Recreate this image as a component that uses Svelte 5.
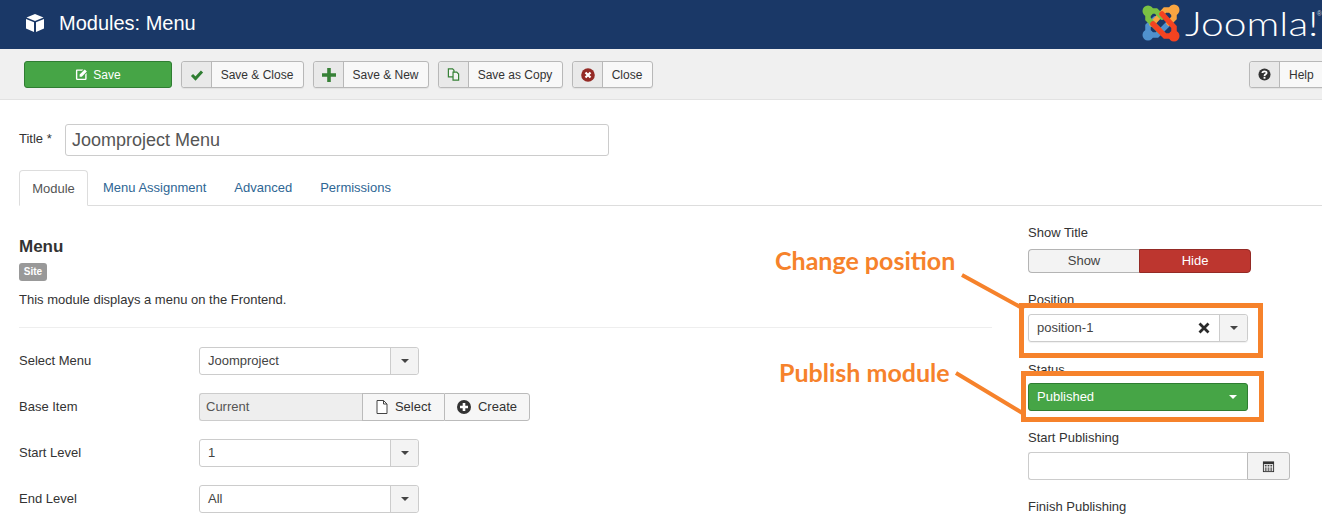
<script>
  const tools = [
    { label: 'Save & Close', icon: 'check', w: 123 },
    { label: 'Save & New', icon: 'plus', w: 116 },
    { label: 'Save as Copy', icon: 'copy', w: 125 },
    { label: 'Close', icon: 'close', w: 81 }
  ];
  const tabs = ['Menu Assignment', 'Advanced', 'Permissions'];
</script>

<div class="page">
  <header class="top">
    <svg class="cube" viewBox="0 0 20 20"><path fill="#fff" d="M10 1 18.5 4.6 10 8 1.500 4.600Z"/><path fill="#fff" d="M1 6 9 9.300V19L1 15.500Z"/><path fill="#fff" d="M19 6 11 9.300V19L19 15.500Z"/></svg>
    <h1>Modules: Menu</h1>
    <div class="brand">
      <svg class="logo" viewBox="0 0 38 38" fill="none" stroke-width="5.500" stroke-linecap="round">
        <g stroke="#5091cd"><circle cx="6" cy="31" r="5.500" fill="#5091cd" stroke="none"/><path d="M6 31V22L13 15M6 31H15L28 18"/></g>
        <g stroke="#f9a541"><circle cx="32" cy="6" r="5.500" fill="#f9a541" stroke="none"/><path d="M32 6H23L10 20M32 6V14L27 19"/></g>
        <g stroke="#7ac143"><circle cx="6" cy="7" r="5.500" fill="#7ac143" stroke="none"/><path d="M6 7H14L20 13M6 7V15L18 27"/></g>
        <g stroke="#f44321"><circle cx="32" cy="32" r="5.500" fill="#f44321" stroke="none"/><path d="M32 32H23L11 20M32 32V23L20 10"/></g>
      </svg>
      <span class="word">Joomla!</span><span class="reg">®</span>
    </div>
  </header>

  <nav class="toolbar">
    <button class="save">
      <svg viewBox="0 0 14 14" class="ico13"><path fill="#fff" d="M2 1.500H9L7.500 3H2.500V11.500H11V7L12.500 5.500V11.500Q12.500 13 11 13H2.500Q1 13 1 11.500V3Q1 1.500 2 1.500Z"/><path fill="#fff" d="M5 7 10.500 1.500 12.800 3.800 7.300 9.300H5Z"/></svg>
      Save
    </button>
    {#each tools as t}
      <button class="tool" style="width:{t.w}px">
        <span class="addon">
          {#if t.icon === 'check'}
            <svg viewBox="0 0 14 14" class="ico14"><path fill="none" stroke="#2f7d32" stroke-width="3" d="M2 7 5.500 10.500 12 3.500"/></svg>
          {:else if t.icon === 'plus'}
            <svg viewBox="0 0 14 14" class="ico14"><path fill="none" stroke="#378137" stroke-width="3.600" d="M7 0V14M0 7H14"/></svg>
          {:else if t.icon === 'copy'}
            <svg viewBox="0 0 14 14" class="ico13"><path fill="#f3f3f3" stroke="#378137" stroke-width="1.300" d="M1.500 1H6L7.500 2.500V9.500H1.500Z"/><path fill="#f3f3f3" stroke="#378137" stroke-width="1.300" d="M6.500 4.500H10.500L12.500 6.500V13H6.500Z"/></svg>
          {:else}
            <svg viewBox="0 0 14 14" class="ico14"><circle cx="7" cy="7" r="6.800" fill="#942a25"/><path stroke="#fff" stroke-width="2.200" d="M4.500 4.500 9.500 9.500M9.500 4.500 4.500 9.500"/></svg>
          {/if}
        </span>
        <span class="lbl">{t.label}</span>
      </button>
    {/each}
    <button class="tool help">
      <span class="addon">
        <svg viewBox="0 0 14 14" class="ico13"><circle cx="7" cy="7" r="6.500" fill="#333"/><path fill="none" stroke="#fff" stroke-width="1.900" d="M4.700 5.400C4.800 3 9.300 3 9.300 5.300 9.300 6.800 7 6.800 7 8.500"/><rect x="6" y="9.500" width="2" height="2" fill="#fff"/></svg>
      </span>
      <span class="lbl">Help</span>
    </button>
  </nav>

  <main class="content">
    <div class="title-row">
      <span class="title-label">Title *</span>
      <div class="title-input">Joomproject Menu</div>
    </div>

    <div class="tabs">
      <span class="tab active">Module</span>
      {#each tabs as t}<span class="tab">{t}</span>{/each}
    </div>

    <div class="columns">
      <section class="left">
        <h2>Menu</h2>
        <span class="badge">Site</span>
        <p class="desc">This module displays a menu on the Frontend.</p>
        <hr />
        <div class="row">
          <span class="row-label">Select Menu</span>
          <div class="select"><span class="val">Joomproject</span><span class="caret-cell"><i class="caret"></i></span></div>
        </div>
        <div class="row">
          <span class="row-label">Base Item</span>
          <div class="picker">
            <span class="current">Current</span>
            <span class="pbtn sel">
              <svg viewBox="0 0 12 14" class="file"><path fill="#fff" stroke="#444" stroke-width="1" d="M1 .5H7.500L11 4V13.500H1Z"/><path fill="none" stroke="#444" d="M7.500 .5V4H11"/></svg>
              <span class="btn-text">Select</span>
            </span>
            <span class="pbtn cre">
              <svg viewBox="0 0 14 14" class="ico14"><circle cx="7" cy="7" r="7" fill="#333"/><path stroke="#fff" stroke-width="2.600" d="M7 3V11M3 7H11"/></svg>
              <span class="btn-text">Create</span>
            </span>
          </div>
        </div>
        <div class="row">
          <span class="row-label">Start Level</span>
          <div class="select"><span class="val">1</span><span class="caret-cell"><i class="caret"></i></span></div>
        </div>
        <div class="row">
          <span class="row-label">End Level</span>
          <div class="select"><span class="val">All</span><span class="caret-cell"><i class="caret"></i></span></div>
        </div>
      </section>

      <aside class="right">
        <div class="lab first">Show Title</div>
        <div class="toggle"><span class="off">Show</span><span class="on">Hide</span></div>
        <div class="lab pos">Position</div>
        <div class="select wide">
          <span class="val">position-1</span>
          <svg viewBox="0 0 12 12" class="x"><path stroke="#2a2a2a" stroke-width="2.800" d="M1.500 1.500 10.500 10.500M10.500 1.500 1.500 10.500"/></svg>
          <span class="caret-cell"><i class="caret"></i></span>
        </div>
        <div class="lab status">Status</div>
        <div class="published"><span class="btn-text">Published</span><i class="caret white"></i></div>
        <div class="lab start">Start Publishing</div>
        <div class="date">
          <span class="date-input"></span>
          <span class="date-btn">
            <svg viewBox="0 0 14 14" class="ico13"><path fill="#333" d="M1 1.500H13V13H1Z"/><path fill="#fff" d="M2 4.500H12V12H2Z"/><path fill="#444" d="M3 5.500H5V7H3ZM6 5.500H8V7H6ZM9 5.500H11V7H9ZM3 8H5V9.500H3ZM6 8H8V9.500H6ZM9 8H11V9.500H9ZM3 10H5V11.500H3ZM6 10H8V11.500H6ZM9 10H11V11.500H9Z"/></svg>
          </span>
        </div>
        <div class="lab finish">Finish Publishing</div>
      </aside>
    </div>
  </main>

  <svg class="lines" viewBox="0 0 1322 519">
    <path d="M962 275 1024 309M956 373 1024 414" stroke="#f6822b" stroke-width="4" fill="none"/>
  </svg>
  <div class="note n1">Change position</div>
  <div class="note n2">Publish module</div>
  <div class="hl h1"></div>
  <div class="hl h2"></div>
</div>

<style>
  :global(body) { margin: 0; background: #fff; overflow: hidden; }
  .page { position: relative; width: 1322px; height: 519px; overflow: hidden; font-family: "Liberation Sans", Arial, sans-serif; font-size: 13px; color: #333; }
  .top { height: 49px; background: #1a3867; display: flex; align-items: center; padding-left: 25px; box-sizing: border-box; color: #fff; }
  .cube { width: 20px; height: 20px; margin-top: -3px; }
  h1 { margin: -2px 0 0 14px; font-weight: 400; font-size: 20px; }
  .brand { margin-left: auto; display: flex; align-items: center; position: relative; width: 180px; height: 49px; }
  .logo { width: 38px; height: 38px; margin-top: -3px; flex: none; }
  .word { font-family: Lato, sans-serif; font-weight: 300; font-size: 33px; margin-left: 5px; margin-top: -3px; transform: scaleX(1.235); transform-origin: left center; }
  .reg { font-size: 7px; position: absolute; right: 0; top: 10px; color: #c9d1dd; }

  .toolbar { height: 51px; box-sizing: border-box; background: #f0f0f0; border-bottom: 1px solid #e2e2e2; display: flex; align-items: center; padding: 1px 0 0 24px; gap: 9px; font-size: 12px; }
  button { font: inherit; padding: 0; margin: 0; height: 27px; box-sizing: border-box; border-radius: 3px; display: flex; align-items: center; flex: none; }
  .save { width: 148px; background: #46a546; border: 1px solid #2f7d32; color: #fff; justify-content: center; gap: 5px; }
  .tool { background: #f8f8f8; border: 1px solid #b8b8b8; color: #333; box-shadow: 0 1px 1px rgba(0,0,0,.06); }
  .addon { width: 29px; height: 100%; background: #e9e9e9; border-right: 1px solid #b8b8b8; display: flex; align-items: center; justify-content: center; flex: none; border-radius: 3px 0 0 3px; }
  .lbl { flex: 1; text-align: center; padding-right: 1px; }
  .help { width: 80px; margin-left: auto; margin-right: -7px; }
  .help .lbl { text-align: left; padding-left: 9px; }
  .ico13 { width: 13px; height: 13px; }
  .ico14 { width: 14px; height: 14px; }

  .content { padding: 24px 0 0 19px; }
  .title-row { display: flex; align-items: flex-start; }
  .title-label { width: 46px; margin-top: 7px; }
  .title-input { width: 544px; height: 32px; box-sizing: border-box; border: 1px solid #ccc; border-radius: 3px; font-size: 18px; line-height: 30px; padding-left: 6px; color: #555; }
  .tabs { display: flex; margin-top: 14px; height: 36px; border-bottom: 1px solid #ddd; box-sizing: border-box; }
  .tab { padding: 0 14px; line-height: 35px; color: #2e6694; box-sizing: border-box; height: 36px; }
  .tab.active { color: #555; width: 69px; padding: 0; text-align: center; border: 1px solid #ddd; border-bottom: 1px solid #fff; border-radius: 4px 4px 0 0; background: #fff; margin-right: 1px; }

  .columns { display: flex; }
  .left { width: 973px; padding-top: 31px; }
  h2 { margin: 0; font-size: 17px; line-height: 20px; font-weight: 700; color: #333; }
  .badge { display: block; width: 28px; height: 18px; margin-top: 6px; box-sizing: border-box; background: #999; color: #fff; font-size: 10px; font-weight: 700; text-align: center; line-height: 18px; border-radius: 3px; }
  .desc { margin: 10px 0 0; line-height: 18px; }
  hr { border: 0; border-top: 1px solid #eee; margin: 18px 0 19px; }
  .row { display: flex; align-items: center; height: 28px; margin-bottom: 18px; }
  .row-label { width: 180px; padding-bottom: 2px; }
  .select { width: 220px; height: 28px; box-sizing: border-box; border: 1px solid #ccc; border-radius: 3px; display: flex; align-items: center; color: #444; }
  .val { flex: 1; padding: 0 0 2px 8px; }
  .caret-cell { width: 28px; height: 100%; box-sizing: border-box; background: #f3f3f3; border-left: 1px solid #ccc; display: flex; align-items: center; justify-content: center; border-radius: 0 3px 3px 0; }
  .caret { display: block; width: 0; height: 0; border: 4px solid transparent; border-top-color: #444; border-bottom: 0; }
  .caret.white { border-top-color: #fff; }
  .btn-text { padding-bottom: 2px; }
  .picker { display: flex; height: 28px; box-sizing: border-box; }
  .current { width: 163px; box-sizing: border-box; background: #eee; border: 1px solid #ccc; border-right: 0; border-radius: 3px 0 0 3px; padding-left: 6px; line-height: 25px; color: #555; }
  .pbtn { box-sizing: border-box; background: #f6f6f6; border: 1px solid #bbb; display: flex; align-items: center; justify-content: center; color: #333; }
  .sel { width: 82px; border-right: 0; gap: 7px; }
  .cre { width: 86px; border-radius: 0 3px 3px 0; gap: 7px; }
  .file { width: 12px; height: 14px; }

  .right { margin-left: 36px; padding-top: 19px; width: 262px; flex: none; }
  .lab { line-height: 16px; }
  .toggle { width: 223px; height: 24px; margin-top: 8px; display: flex; box-sizing: border-box; }
  .off { width: 111px; box-sizing: border-box; background: #f3f3f3; border: 1px solid #b4b4b4; border-right: 0; border-radius: 4px 0 0 4px; text-align: center; line-height: 22px; color: #444; }
  .on { width: 112px; box-sizing: border-box; background: #bd362f; border: 1px solid #942a25; color: #fff; border-radius: 0 4px 4px 0; text-align: center; line-height: 22px; }
  .pos { margin-top: 19px; }
  .wide { margin-top: 6px; box-shadow: 0 1px 1px rgba(0,0,0,.06); }
  .x { width: 12px; height: 12px; margin-right: 9px; }
  .status { margin-top: 20px; }
  .published { width: 220px; height: 28px; margin-top: 5px; box-sizing: border-box; background: #46a546; border: 1px solid #2f7d32; border-radius: 3px; color: #fff; display: flex; align-items: center; justify-content: space-between; padding: 0 10px 0 8px; }
  .start { margin-top: 19px; }
  .date { display: flex; width: 262px; height: 28px; margin-top: 6px; }
  .date-input { width: 219px; box-sizing: border-box; border: 1px solid #ccc; border-right: 0; border-radius: 3px 0 0 3px; }
  .date-btn { width: 43px; box-sizing: border-box; background: #f3f3f3; border: 1px solid #bbb; border-radius: 0 3px 3px 0; display: flex; align-items: center; justify-content: center; }
  .finish { margin-top: 19px; }

  .lines { position: absolute; inset: 0; width: 1322px; height: 519px; pointer-events: none; }
  .note { position: absolute; font-family: Lato, sans-serif; font-weight: 700; font-size: 25px; line-height: 30px; color: #f6822b; white-space: nowrap; }
  .n1 { left: 775px; top: 245px; }
  .n2 { left: 779px; top: 357px; }
  .hl { position: absolute; box-sizing: border-box; border: 5px solid #f6822b; }
  .h1 { left: 1019px; top: 303px; width: 244px; height: 55px; }
  .h2 { left: 1021px; top: 371px; width: 243px; height: 51px; }
</style>
